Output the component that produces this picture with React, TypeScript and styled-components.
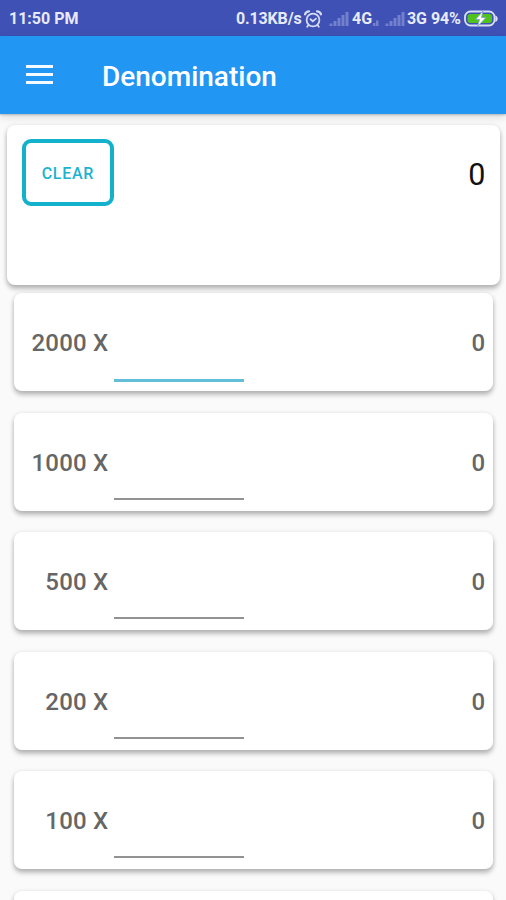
import React from 'react';
import styled, { createGlobalStyle } from 'styled-components';

const GlobalStyle = createGlobalStyle`
  * { box-sizing: border-box; }
  body {
    margin: 0;
    background: #fafafa;
    font-family: Roboto, "Liberation Sans", sans-serif;
    overflow: hidden;
  }
`;

const Screen = styled.div`
  display: flex;
  flex-direction: column;
  width: 506px;
  height: 900px;
  overflow: hidden;
  background: #fafafa;
`;

const StatusBar = styled.header`
  flex: none;
  display: flex;
  align-items: center;
  height: 36px;
  padding: 1px 8px 0 9px;
  background: #3f51b5;
  color: #e8eafa;
  font-size: 16px;
  font-weight: 700;
  line-height: 20px;
  white-space: nowrap;
`;

const StatusText = styled.span<{ $width: number; $gap?: number; $spacing?: number }>`
  flex: none;
  width: ${p => p.$width}px;
  padding-top: 1px;
  margin-right: ${p => p.$gap ?? 0}px;
  letter-spacing: ${p => p.$spacing ?? 0}px;
`;

const Spacer = styled.div`
  flex: 1;
`;

const StatusIcon = styled.svg<{ $gap?: number }>`
  flex: none;
  display: block;
  margin-right: ${p => p.$gap ?? 0}px;
`;

const AppBar = styled.div`
  flex: none;
  position: relative;
  display: flex;
  align-items: center;
  height: 78px;
  padding: 3px 26px 0;
  background: #2196f3;
  color: #fff;
  box-shadow: 0 1px 2px rgba(0, 0, 0, 0.22), 0 3px 9px rgba(0, 0, 0, 0.12);
`;

const MenuButton = styled.button`
  display: flex;
  flex-direction: column;
  gap: 4.5px;
  width: 27px;
  margin: 0 49px 4px 0;
  padding: 0;
  border: 0;
  background: none;
`;

const MenuLine = styled.span`
  height: 3.3px;
  background: #f4faff;
`;

const Title = styled.h1`
  margin: 0;
  font-size: 28px;
  line-height: 36px;
  font-weight: 500;
`;

const Content = styled.main`
  flex: none;
  display: flex;
  flex-direction: column;
  padding: 11px 6px 0 7.4px;
`;

const Card = styled.section`
  background: #fff;
  border-radius: 8px;
  box-shadow: 0 4px 5px rgba(0, 0, 0, 0.22), 0 1px 5px rgba(0, 0, 0, 0.14);
`;

const SummaryCard = styled(Card)`
  display: flex;
  justify-content: space-between;
  align-items: flex-start;
  height: 160px;
  padding: 14px 14.6px 0 14.2px;
`;

const ClearButton = styled.button`
  width: 92.6px;
  height: 67px;
  padding: 3px 0 0;
  border: 4px solid #14b1cd;
  border-radius: 9px;
  background: #fff;
  color: #1cb3cf;
  font: 500 16px/20px Roboto, "Liberation Sans", sans-serif;
  letter-spacing: 0.7px;
`;

const Total = styled.output`
  padding-top: 17px;
  color: #111;
  font-size: 30.5px;
  line-height: 38px;
`;

const DenominationList = styled.div`
  display: flex;
  flex-direction: column;
  gap: 21.5px;
  margin-top: 8px;
  padding: 0 7px;
`;

const DenominationCard = styled(Card)`
  display: flex;
  align-items: flex-start;
  height: 98px;
  padding: 0 7.8px 0 0;
  color: #666;
  font-size: 24px;
  line-height: 30px;
  font-weight: 500;
`;

const Label = styled.label`
  width: 94px;
  padding-top: 35px;
  text-align: right;
  letter-spacing: 0.2px;
`;

const CountField = styled.input<{ $active: boolean }>`
  width: 130px;
  height: ${p => (p.$active ? 88.5 : 87)}px;
  margin-left: 6px;
  padding: 35px 0 0;
  border: 0;
  border-bottom: ${p => (p.$active ? '3px solid #62bfd7' : '2px solid #929292')};
  border-radius: 0;
  background: transparent;
  outline: 0;
  font: inherit;
  color: inherit;
`;

const Amount = styled.output`
  margin-left: auto;
  padding-top: 35px;
`;

const AlarmIcon = () => (
  <StatusIcon width="18" height="18" viewBox="0 0 18 18" fill="none" stroke="#d5daf5" strokeWidth="1.8" strokeLinecap="round" $gap={7}>
    <circle cx="9" cy="10" r="6.4" />
    <path d="M6.5 9.2 8.8 11.2 12 8.6" />
    <path d="M1 4.3C1.6 2.5 3 1.3 5 1.3M17 4.3C16.4 2.5 15 1.3 13 1.3" strokeWidth="2.2" />
    <path d="M4.3 15.2 3.2 16.7M13.7 15.2 14.8 16.7" />
  </StatusIcon>
);

const SignalIcon = ({ gap }: { gap: number }) => (
  <StatusIcon width="20" height="16" viewBox="0 0 20 16" fill="#7380cd" $gap={gap}>
    <rect x="0.5" y="12.5" width="3" height="2.5" />
    <rect x="4.5" y="10" width="3" height="5" />
    <rect x="8.5" y="7" width="3" height="8" />
    <rect x="12.5" y="4" width="3" height="11" />
    <rect x="16.5" y="1" width="3" height="14" />
  </StatusIcon>
);

const WeakSignalIcon = () => (
  <StatusIcon width="8" height="16" viewBox="0 0 8 16" fill="#7480cc" $gap={5}>
    <rect x="1" y="12" width="2.5" height="3" />
    <rect x="4" y="9.5" width="2.5" height="5.5" />
  </StatusIcon>
);

const BatteryIcon = () => (
  <StatusIcon width="34" height="18" viewBox="0 0 34 18">
    <rect x="1" y="1.5" width="29.5" height="14" rx="5.5" fill="#3f51b5" stroke="#d9def5" strokeWidth="1.8" />
    <rect x="3.5" y="4" width="24.5" height="9" rx="3" fill="#4fc31c" />
    <path d="M31.3 5.5C34.5 6.3 34.5 11.2 31.3 12Z" fill="#d9def5" />
    <path d="M19 1 11.5 9.5H15.5L13.5 16.5 22 7.5H17.5Z" fill="#fff" stroke="#7c9fc9" strokeWidth="0.8" />
  </StatusIcon>
);

const denominations = [2000, 1000, 500, 200, 100];

export default function App() {
  return (
    <>
      <GlobalStyle />
      <Screen>
        <StatusBar>
          <StatusText $width={72}>11:50 PM</StatusText>
          <Spacer />
          <StatusText $width={65} $gap={3} $spacing={-0.15}>0.13KB/s</StatusText>
          <AlarmIcon />
          <SignalIcon gap={3} />
          <StatusText $width={20} $gap={0}>4G</StatusText>
          <WeakSignalIcon />
          <SignalIcon gap={2} />
          <StatusText $width={20} $gap={4} $spacing={-0.2}>3G</StatusText>
          <StatusText $width={30} $gap={3} $spacing={-0.2}>94%</StatusText>
          <BatteryIcon />
        </StatusBar>
        <AppBar>
          <MenuButton aria-label="Menu">
            <MenuLine />
            <MenuLine />
            <MenuLine />
          </MenuButton>
          <Title>Denomination</Title>
        </AppBar>
        <Content>
          <SummaryCard>
            <ClearButton>CLEAR</ClearButton>
            <Total>0</Total>
          </SummaryCard>
          <DenominationList>
            {denominations.map((value, index) => (
              <DenominationCard key={value}>
                <Label htmlFor={`count-${value}`}>{value} X</Label>
                <CountField id={`count-${value}`} $active={index === 0} />
                <Amount>0</Amount>
              </DenominationCard>
            ))}
            <DenominationCard />
          </DenominationList>
        </Content>
      </Screen>
    </>
  );
}
